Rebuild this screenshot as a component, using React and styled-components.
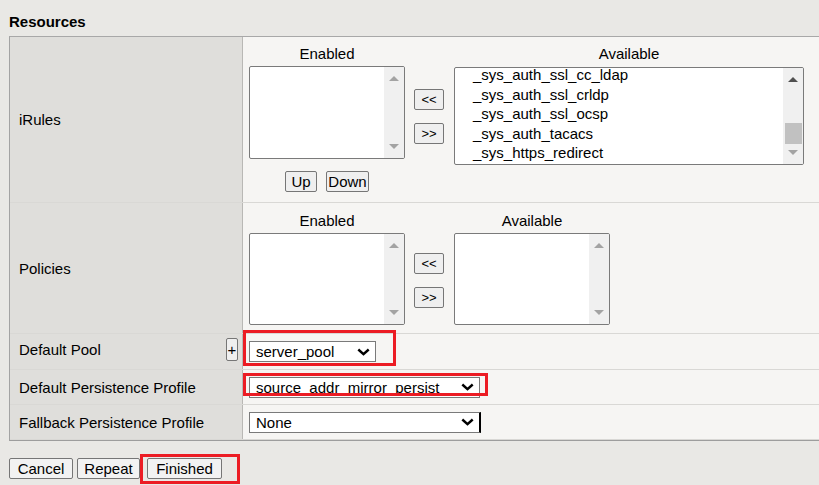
import React from "react";
import styled, { createGlobalStyle } from "styled-components";

const GlobalStyle = createGlobalStyle`
  html { overflow: hidden; background: #e9e8e5; }
  html, body { margin: 0; padding: 0; }
  body {
    min-height: 100vh;
    background: #e9e8e5;
    font-family: "Liberation Sans", Arial, sans-serif;
    font-size: 15px;
    color: #000;
  }
  * { box-sizing: border-box; }
`;

const Page = styled.div`
  padding-left: 9px;
  width: 840px;
`;

const SectionTitle = styled.div`
  font-weight: bold;
  font-size: 15px;
  line-height: 17px;
  height: 36px;
  padding-top: 13px;
`;

const Table = styled.div`
  width: 830px;
  border-left: 1px solid #a3a3a3;
  border-top: 1px solid #a8a8a8;
  border-bottom: 1px solid #9d9d9d;
`;

const Row = styled.div`
  display: grid;
  grid-template-columns: 233px 1fr;
  height: ${(p) => p.$h}px;
  border-bottom: 1px solid #d9d8d5;
`;

const LabelCell = styled.div`
  background: #dfdedb;
  border-right: 1px solid #b9b8b5;
  padding: 0 4px ${(p) => p.$pb || 0}px 9px;
  display: flex;
  align-items: center;
  justify-content: space-between;
  line-height: 17px;
`;

const ValueCell = styled.div`
  position: relative;
  background: #f6f5f3;
  padding: ${(p) => p.$pt || 0}px 0 0 6px;
  display: flex;
  align-items: ${(p) => (p.$pt ? "flex-start" : "center")};
`;

const ListGrid = styled.div`
  display: grid;
  grid-template-columns: 156px 30px auto;
  column-gap: 9px;
  align-items: start;
`;

const ListHeader = styled.div`
  text-align: center;
  line-height: 18px;
  margin-bottom: 3px;
  margin-left: ${(p) => p.$ml || 0}px;
`;

const ListBox = styled.div`
  position: relative;
  width: ${(p) => p.$w}px;
  height: ${(p) => p.$h}px;
  margin-top: ${(p) => p.$mt || 0}px;
  margin-left: ${(p) => p.$ml || 0}px;
  border: 1px solid #7a7a7a;
  border-radius: 2px;
  background: #fff;
  display: flex;
  overflow: hidden;
`;

const Options = styled.div`
  flex: 1;
  padding-left: 18px;
  margin-top: -3px;
  line-height: 19.5px;
  white-space: nowrap;
`;

const ScrollTrack = styled.div`
  width: 20px;
  background: #f0f0f0;
  position: relative;
  display: flex;
  flex-direction: column;
  justify-content: space-between;
  align-items: center;
  padding: 9px 0 9px;
`;

const Arrow = styled.div`
  width: 0;
  height: 0;
  border-left: 5px solid transparent;
  border-right: 5px solid transparent;
  ${(p) =>
    p.$down
      ? `border-top: 5px solid ${p.$on ? "#505050" : "#a3a3a3"};`
      : `border-bottom: 5px solid ${p.$on ? "#505050" : "#a3a3a3"};`}
`;

const Thumb = styled.div`
  position: absolute;
  left: 2px;
  right: 1px;
  top: ${(p) => p.$top}px;
  height: ${(p) => p.$h}px;
  background: #c1c1c1;
`;

const MoveCol = styled.div`
  display: flex;
  flex-direction: column;
  gap: 13px;
  align-self: center;
  margin-top: ${(p) => p.$mt || 0}px;
`;

const SmallButton = styled.button`
  font-family: "Liberation Sans", Arial, sans-serif;
  font-size: ${(p) => p.$fs || 15}px;
  color: #000;
  background: #efefef;
  border: 1px solid #767676;
  border-radius: 2px;
  height: ${(p) => p.$h || 21}px;
  width: ${(p) => (p.$w ? `${p.$w}px` : "auto")};
  padding: 0 ${(p) => (p.$px !== undefined ? p.$px : 5)}px;
  line-height: 1;
  margin: 0;
  display: inline-flex;
  align-items: center;
  justify-content: center;
`;

const OrderRow = styled.div`
  display: flex;
  justify-content: center;
  gap: 9px;
  margin-top: ${(p) => p.$mt}px;
`;

const Select = styled.div`
  width: ${(p) => p.$w}px;
  height: 21px;
  background: #fff;
  border: 1px solid #7a7a7a;
  ${(p) => (p.$edge ? "border-right: 2px solid #000;" : "")}
  display: flex;
  align-items: center;
  justify-content: space-between;
  padding: 0 5px 0 6px;
  line-height: 17px;
  white-space: nowrap;
`;

const Chevron = () => (
  <svg width="13" height="8" viewBox="0 0 13 8">
    <polyline points="1.3,1.5 6.5,6.2 11.7,1.5" fill="none" stroke="#000" strokeWidth="2.4" />
  </svg>
);

const Annot = styled.div`
  position: absolute;
  left: ${(p) => p.$x}px;
  top: ${(p) => p.$y}px;
  width: ${(p) => p.$w}px;
  height: ${(p) => p.$h}px;
  border: 3px solid #ec1c24;
  pointer-events: none;
`;

const ButtonBar = styled.div`
  position: relative;
  display: flex;
  margin-top: 17px;
`;

const ActionButton = styled.button`
  font-family: "Liberation Sans", Arial, sans-serif;
  font-size: 15px;
  color: #000;
  background: #f2f2f2;
  border: 1px solid #767676;
  border-radius: 2px;
  height: 21px;
  width: ${(p) => p.$w}px;
  margin: 0 ${(p) => p.$mr || 0}px 0 0;
  padding: 0;
  line-height: 1;
`;

const Scroll = ({ on, thumb }) => (
  <ScrollTrack>
    <Arrow $on={on} />
    {thumb && <Thumb $top={thumb[0]} $h={thumb[1]} />}
    <Arrow $down />
  </ScrollTrack>
);

const options = [
  "_sys_auth_ssl_cc_ldap",
  "_sys_auth_ssl_crldp",
  "_sys_auth_ssl_ocsp",
  "_sys_auth_tacacs",
  "_sys_https_redirect",
];

export default function App() {
  return (
    <Page>
      <GlobalStyle />
      <SectionTitle>Resources</SectionTitle>
      <Table>
        <Row $h={166}>
          <LabelCell>iRules</LabelCell>
          <ValueCell $pt={8}>
            <ListGrid>
              <ListHeader>Enabled</ListHeader>
              <div />
              <ListHeader $ml={1}>Available</ListHeader>
              <ListBox $w={156} $h={93}>
                <Options />
                <Scroll />
              </ListBox>
              <MoveCol $mt={1}>
                <SmallButton $w={30} $fs={13} $px={0}>&lt;&lt;</SmallButton>
                <SmallButton $w={30} $fs={13} $px={0}>&gt;&gt;</SmallButton>
              </MoveCol>
              <ListBox $w={350} $h={98} $mt={1} $ml={1}>
                <Options>
                  {options.map((o) => (
                    <div key={o}>{o}</div>
                  ))}
                </Options>
                <Scroll on thumb={[55, 21]} />
              </ListBox>
              <OrderRow $mt={6}>
                <SmallButton $w={32} $px={0}>Up</SmallButton>
                <SmallButton $w={43} $px={0}>Down</SmallButton>
              </OrderRow>
            </ListGrid>
          </ValueCell>
        </Row>
        <Row $h={131}>
          <LabelCell>Policies</LabelCell>
          <ValueCell $pt={9}>
            <ListGrid>
              <ListHeader>Enabled</ListHeader>
              <div />
              <ListHeader $ml={1}>Available</ListHeader>
              <ListBox $w={156} $h={92}>
                <Options />
                <Scroll />
              </ListBox>
              <MoveCol $mt={2}>
                <SmallButton $w={30} $fs={13} $px={0}>&lt;&lt;</SmallButton>
                <SmallButton $w={30} $fs={13} $px={0}>&gt;&gt;</SmallButton>
              </MoveCol>
              <ListBox $w={156} $h={92} $ml={1}>
                <Options />
                <Scroll />
              </ListBox>
            </ListGrid>
          </ValueCell>
        </Row>
        <Row $h={36}>
          <LabelCell $pb={4}>
            <span>Default Pool</span>
            <SmallButton $w={12} $h={23} $px={0}>+</SmallButton>
          </LabelCell>
          <ValueCell>
            <Select $w={127}>
              <span>server_pool</span>
              <Chevron />
            </Select>
            <Annot $x={0} $y={-4} $w={153} $h={36} />
          </ValueCell>
        </Row>
        <Row $h={35}>
          <LabelCell>Default Persistence Profile</LabelCell>
          <ValueCell>
            <Select $w={231}>
              <span>source_addr_mirror_persist</span>
              <Chevron />
            </Select>
            <Annot $x={0} $y={3} $w={245} $h={23} />
          </ValueCell>
        </Row>
        <Row $h={35}>
          <LabelCell>Fallback Persistence Profile</LabelCell>
          <ValueCell>
            <Select $w={232} $edge>
              <span>None</span>
              <Chevron />
            </Select>
          </ValueCell>
        </Row>
      </Table>
      <ButtonBar>
        <ActionButton $w={64} $mr={4}>Cancel</ActionButton>
        <ActionButton $w={63} $mr={7}>Repeat</ActionButton>
        <ActionButton $w={75}>Finished</ActionButton>
        <Annot $x={131} $y={-4} $w={100} $h={30} />
      </ButtonBar>
    </Page>
  );
}
